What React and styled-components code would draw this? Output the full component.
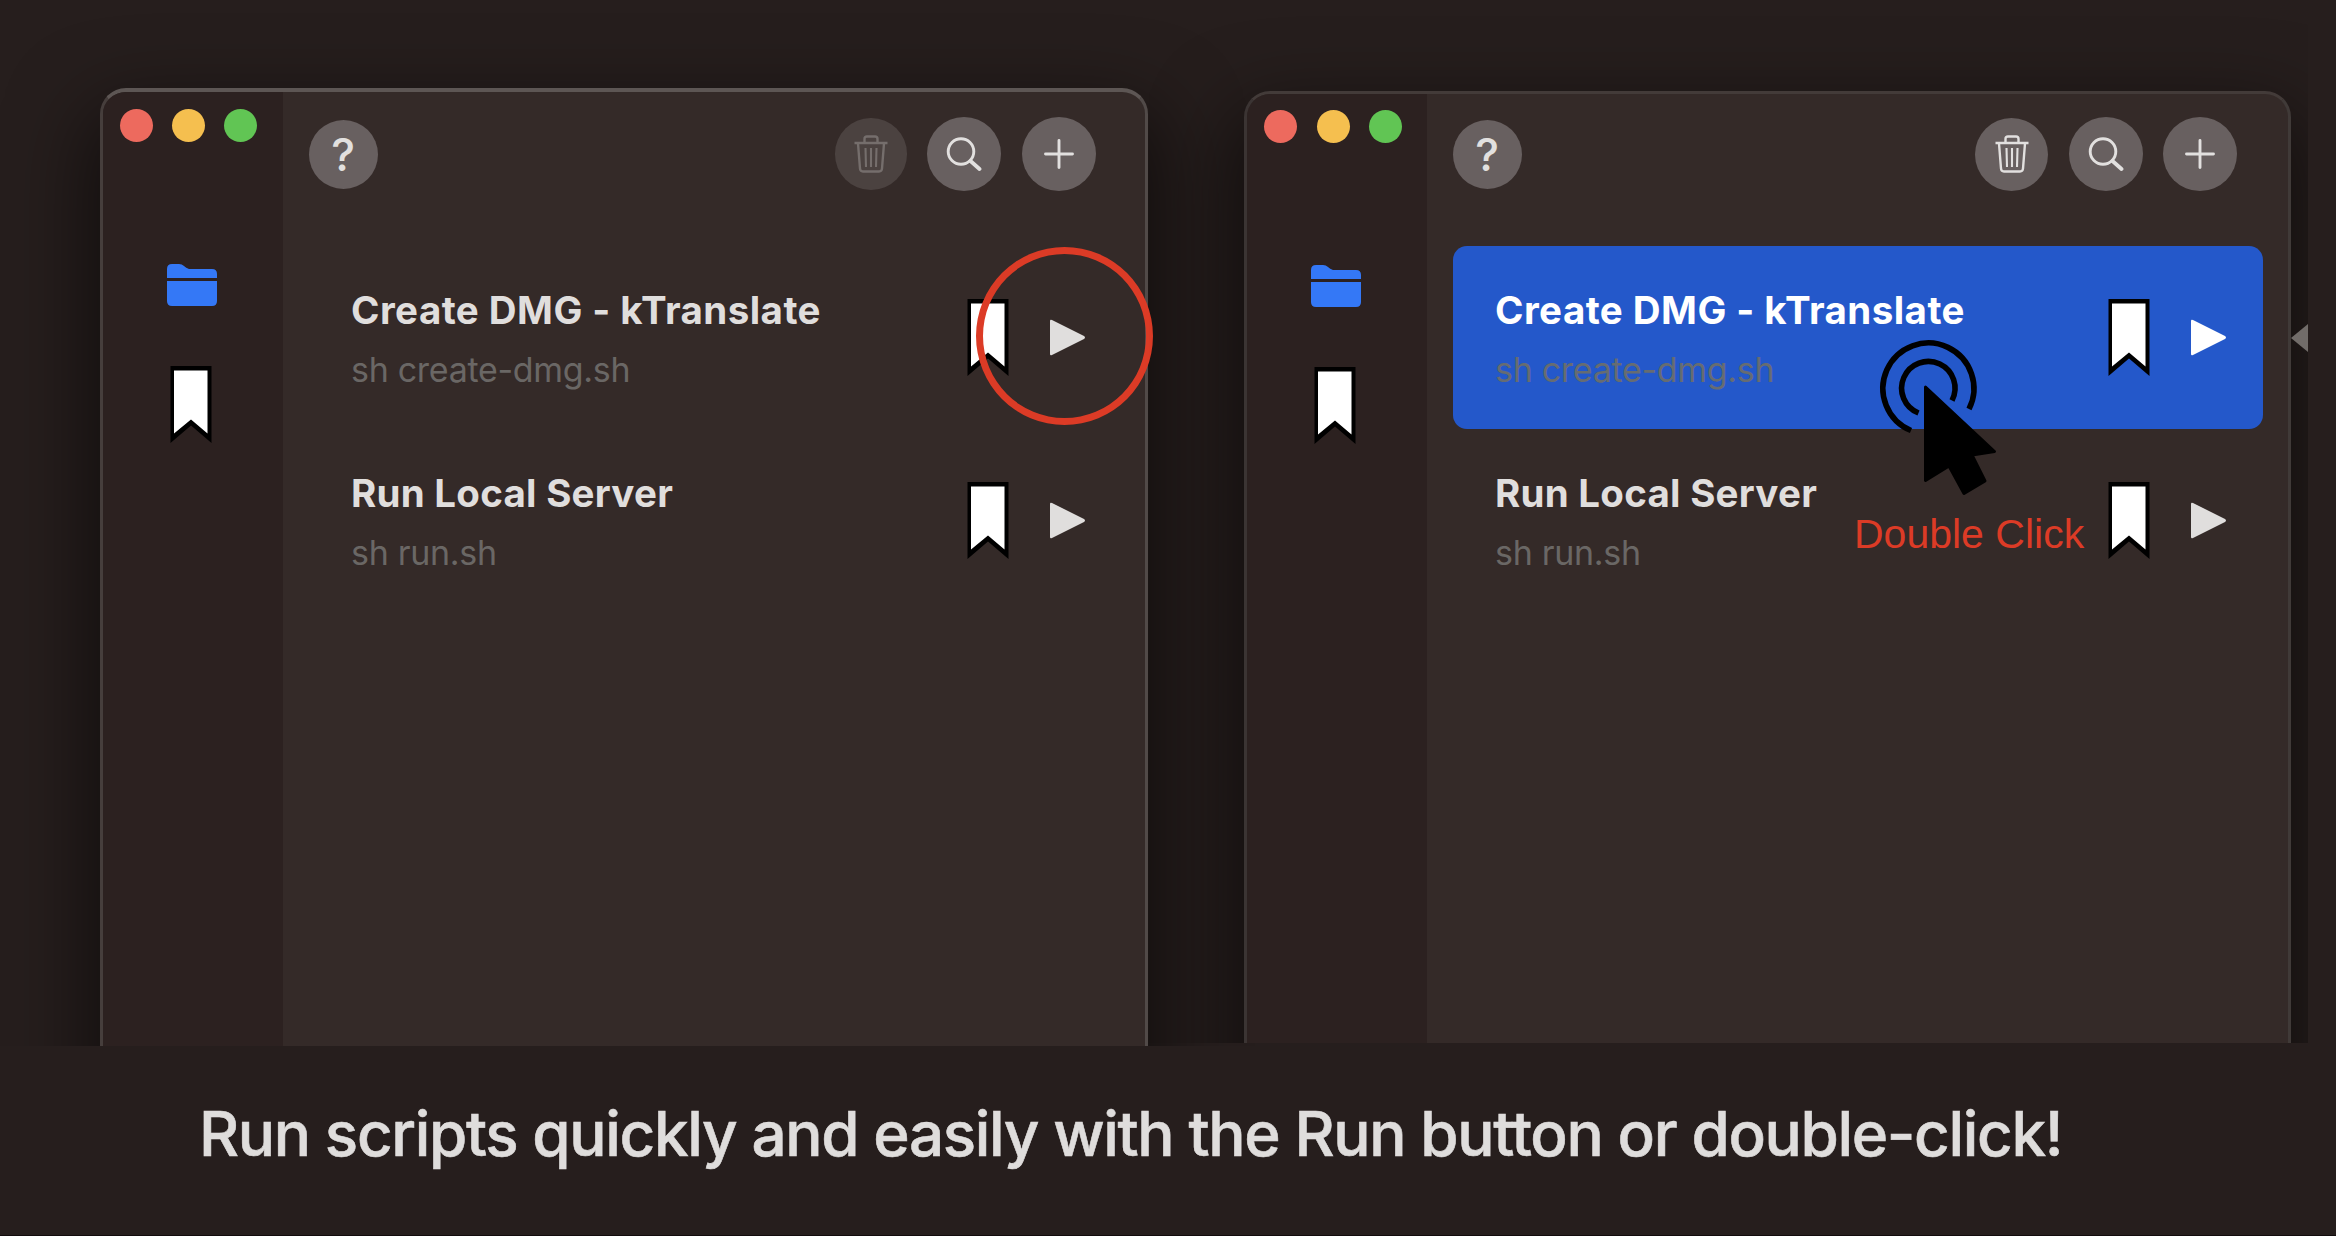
import React from "react";
import styled, { createGlobalStyle } from "styled-components";

const GlobalStyle = createGlobalStyle`
  * { box-sizing: border-box; }
  body { margin: 0; background: #261e1d; }
`;

const Page = styled.main`
  width: 2336px;
  height: 1236px;
  overflow: hidden;
  display: flex;
  flex-direction: column;
  background: #261e1d;
  font-family: Inter, "Liberation Sans", sans-serif;
  border-bottom: 1px solid #120c0d;
`;

const Stage = styled.div`
  height: 1046px;
  display: flex;
  align-items: flex-start;
`;

const Shot = styled.section`
  position: relative;
  flex: none;
  width: ${(p) => p.$width}px;
  height: ${(p) => p.$height}px;
  padding: ${(p) => p.$pad};
  overflow-x: ${(p) => (p.$bleed ? "visible" : "clip")};
  overflow-y: clip;
`;

const Window = styled.div`
  width: ${(p) => p.$width}px;
  height: 1100px;
  display: flex;
  border-style: solid;
  border-width: ${(p) => (p.$bright ? "4px 3px 3px 3px" : "3px")};
  border-color: ${(p) =>
    p.$bright ? "#5d5654 #514a48 #463e3c #463e3c" : "#433b39 #403a38 #3b3433 #3b3433"};
  border-radius: 26px;
  overflow: hidden;
  background: #342a28;
  box-shadow: 0 32px 80px 12px rgba(0, 0, 0, 0.54);
`;

const Sidebar = styled.nav`
  width: 180px;
  background: #2c2120;
  display: flex;
  flex-direction: column;
  padding-top: ${(p) => p.$top}px;
`;

const Lights = styled.div`
  display: flex;
  gap: ${(p) => p.$gap}px;
  padding-left: ${(p) => p.$left}px;
  height: 33px;
`;

const Light = styled.span`
  width: 33px;
  height: 33px;
  border-radius: 50%;
  background: ${(p) => p.$color};
`;

const SideIcons = styled.div`
  display: flex;
  flex-direction: column;
  align-items: center;
  gap: 60px;
  padding: 122px 3px 0 0;

  svg { display: block; }
  svg:last-child { margin-right: 2px; }
`;

const Main = styled.div`
  flex: 1;
  min-width: 0;
`;

const Toolbar = styled.header`
  display: flex;
  align-items: center;
  gap: 20.5px;
  height: 76px;
  margin-top: ${(p) => p.$top}px;
  padding: 0 ${(p) => p.$right}px 0 25.5px;
`;

const Round = styled.button`
  width: ${(p) => p.$size}px;
  height: ${(p) => p.$size}px;
  border: 0;
  padding: 0;
  border-radius: 50%;
  display: flex;
  align-items: center;
  justify-content: center;
  background: ${(p) => (p.$dim ? "#4b4240" : "#686060")};
  color: ${(p) => (p.$dim ? "#756e6c" : "#e2e0df")};
  font: 500 45px/69px Inter, sans-serif;
  margin-right: ${(p) => (p.$lead ? "auto" : 0)};
`;

const List = styled.div`
  padding: ${(p) => p.$top}px 25px 0 26px;
`;

const Row = styled.article`
  display: flex;
  align-items: center;
  height: 183px;
  padding: 0 ${(p) => p.$right}px 0 42px;
  border-radius: 14px;
  background: ${(p) => (p.$active ? "#2458ca" : "transparent")};
  color: ${(p) => (p.$active ? "#ffffff" : "#e0dedd")};

  svg { display: block; flex: none; }
`;

const Texts = styled.div`
  flex: 1;
  min-width: 0;
  height: 120px;
  white-space: nowrap;
`;

const Title = styled.h2`
  margin: 8px 0 0;
  font-size: 38.5px;
  line-height: 48px;
  font-weight: 700;
  letter-spacing: ${(p) => p.$track}px;
`;

const Command = styled.p`
  margin: 12px 0 0;
  font-size: 34px;
  line-height: 48px;
  letter-spacing: -0.3px;
  color: ${(p) => (p.$active ? "#666c72" : "#6a6765")};
`;

const RowIcons = styled.div`
  display: flex;
  align-items: center;
  gap: 40px;
`;

const Ring = styled.div`
  position: absolute;
  left: 976px;
  top: 247px;
  width: 177px;
  height: 178px;
  border: 7.5px solid #dc3b26;
  border-radius: 50%;
`;

const Cursor = styled.svg`
  position: absolute;
  left: 724px;
  top: 330px;
`;

const DoubleClick = styled.span`
  position: absolute;
  left: 705px;
  top: 510px;
  font: 41px/48px "Liberation Sans", Arial, sans-serif;
  color: #dc3b26;
  white-space: nowrap;
`;

const Pointer = styled.svg`
  position: absolute;
  left: 1142px;
  top: 323px;
`;

const Caption = styled.h1`
  margin: 0;
  padding: 46px 0 0 199px;
  font-size: 62px;
  line-height: 84px;
  font-weight: 500;
  letter-spacing: -1.36px;
  color: #dfdddc;
  -webkit-text-stroke: 0.6px #dfdddc;
  white-space: nowrap;
`;

const Folder = () => (
  <svg width="50" height="42" viewBox="0 0 50 42" fill="#3478f6">
    <path d="M0 14V5Q0 0 5 0H12Q15 0 17 2T22 5H45Q50 5 50 10V14Z" />
    <path d="M0 17H50V37Q50 42 45 42H5Q0 42 0 37Z" />
  </svg>
);

const Bookmark = () => (
  <svg width="42" height="78" viewBox="0 0 42 78">
    <path d="M0.500 0H41.500V77L21 59.500L0.500 77Z" fill="#000" />
    <path d="M4 4.500H37.500V67.500L21 53.500L4 67.500Z" fill="#fff" />
  </svg>
);

const Play = () => (
  <svg width="37" height="37" viewBox="0 0 37 37">
    <path d="M1 2Q1 0 3 1L35 17Q37 18.500 35 20L3 36Q1 37 1 35Z" fill="currentColor" />
  </svg>
);

const Trash = () => (
  <svg width="34" height="38" viewBox="0 0 34 38" fill="none" stroke="currentColor" strokeWidth="2.4">
    <path d="M0.500 8H33.500M10.500 8V4Q10.500 1.500 13 1.500H21Q23.500 1.500 23.500 4V8M4 8.500L6 33.500Q6.200 36.500 9 36.500H25Q27.800 36.500 28 33.500L30 8.500" />
    <path d="M11.500 13L12 32M17 13V32M22.500 13L22 32" strokeWidth="2.1" />
  </svg>
);

const Search = () => (
  <svg width="36" height="35" viewBox="0 0 36 35" fill="none" stroke="currentColor" strokeLinecap="round">
    <circle cx="15" cy="14.500" r="12.800" strokeWidth="2.900" />
    <path d="M24.500 24L33.500 32" strokeWidth="3.800" />
  </svg>
);

const Plus = () => (
  <svg width="30" height="30" viewBox="0 0 30 30" stroke="currentColor" strokeWidth="2.900" strokeLinecap="round">
    <path d="M15 1.500V28.500M1.500 15H28.500" />
  </svg>
);

const scripts = [
  { title: "Create DMG - kTranslate", command: "sh create-dmg.sh", track: 0.45 },
  { title: "Run Local Server", command: "sh run.sh", track: 0.25 },
];

function ScriptWindow({ bright, width, activeRow, canDelete }) {
  return (
    <Window $bright={bright} $width={width}>
      <Sidebar $top={bright ? 17 : 16}>
        <Lights $left={bright ? 16.5 : 17} $gap={bright ? 19.2 : 19.6}>
          <Light $color="#ed6a5e" />
          <Light $color="#f5bf4f" />
          <Light $color="#61c554" />
        </Lights>
        <SideIcons>
          <Folder />
          <Bookmark />
        </SideIcons>
      </Sidebar>
      <Main>
        <Toolbar $top={bright ? 24 : 22} $right={bright ? 49 : 51}>
          <Round $size={69} $lead>?</Round>
          <Round $size={bright ? 71.5 : 73} $dim={!canDelete}><Trash /></Round>
          <Round $size={74}><Search /></Round>
          <Round $size={74}><Plus /></Round>
        </Toolbar>
        <List $top={54}>
          {scripts.map((s, i) => (
            <Row key={s.title} $active={i === activeRow} $right={bright ? 34 : 36.5}>
              <Texts>
                <Title $track={s.track}>{s.title}</Title>
                <Command $active={i === activeRow}>{s.command}</Command>
              </Texts>
              <RowIcons>
                <Bookmark />
                <Play />
              </RowIcons>
            </Row>
          ))}
        </List>
      </Main>
    </Window>
  );
}

const ClickCursor = () => (
  <Cursor width="130" height="175" viewBox="1873 330 130 175">
    <g fill="none" stroke="#000" strokeWidth="5.600">
      <path d="M1911 430.500A45.500 45.500 0 1 1 1969 409" />
      <path d="M1918.500 413A26.700 26.700 0 1 1 1952 400.500" />
    </g>
    <path
      d="M1925.500 387L1994.500 451.500L1972 455L1985 481L1964 493.500L1949 466L1925.500 480.500Z"
      fill="#000"
      stroke="#000"
      strokeWidth="3"
      strokeLinejoin="round"
    />
  </Cursor>
);

export default function App() {
  return (
    <Page>
      <GlobalStyle />
      <Stage>
        <Shot $width={1149} $height={1046} $pad="88px 0 0 100px" $bleed>
          <ScriptWindow bright width={1047.5} />
          <Ring />
        </Shot>
        <Shot $width={1159} $height={1043} $pad="91px 0 0 95px">
          <ScriptWindow width={1047} activeRow={0} canDelete />
          <ClickCursor />
          <DoubleClick>Double Click</DoubleClick>
          <Pointer width="17" height="30" viewBox="0 0 17 30"><path d="M0 15L17 1V29Z" fill="#716c69" /></Pointer>
        </Shot>
      </Stage>
      <Caption>Run scripts quickly and easily with the Run button or double-click!</Caption>
    </Page>
  );
}
